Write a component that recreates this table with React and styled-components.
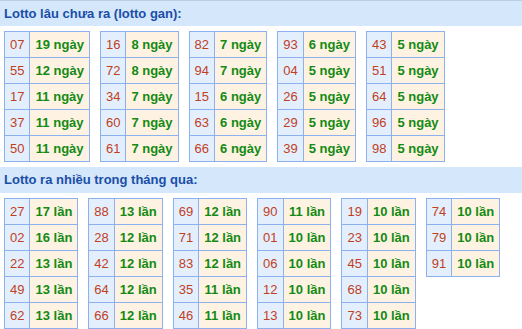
import React from "react"
import styled, { createGlobalStyle } from "styled-components"

const GlobalStyle = createGlobalStyle`
  body {
    margin: 0;
    background: #fff;
    font-family: "Liberation Sans", Arial, sans-serif;
  }
`

const gan = [
  [["07", 19], ["55", 12], ["17", 11], ["37", 11], ["50", 11]],
  [["16", 8], ["72", 8], ["34", 7], ["60", 7], ["61", 7]],
  [["82", 7], ["94", 7], ["15", 6], ["63", 6], ["66", 6]],
  [["93", 6], ["04", 5], ["26", 5], ["29", 5], ["39", 5]],
  [["43", 5], ["51", 5], ["64", 5], ["96", 5], ["98", 5]],
]

const nhieu = [
  [["27", 17], ["02", 16], ["22", 13], ["49", 13], ["62", 13]],
  [["88", 13], ["28", 12], ["42", 12], ["64", 12], ["66", 12]],
  [["69", 12], ["71", 12], ["83", 12], ["35", 11], ["46", 11]],
  [["90", 11], ["01", 10], ["06", 10], ["12", 10], ["13", 10]],
  [["19", 10], ["23", 10], ["45", 10], ["68", 10], ["73", 10]],
  [["74", 10], ["79", 10], ["91", 10]],
]

const Page = styled.div`
  width: 522px;
`

const Title = styled.div`
  height: 26px;
  line-height: 26px;
  padding-left: 4px;
  box-sizing: border-box;
  background: #d4e7fb;
  border-top: ${props => (props.$line ? "1px solid #b9cde3" : "none")};
  color: #1a4ea8;
  font-size: 13px;
  font-weight: bold;
`

const Tables = styled.div`
  display: flex;
  align-items: flex-start;
  gap: 10px;
  padding: 5px 4px 5px;
`

const Table = styled.table`
  border-collapse: collapse;
  font-size: 13px;
`

const Num = styled.td`
  height: 25px;
  padding: 0 5px;
  border: 1px solid #8db0ee;
  background: #e4effd;
  color: #c0401e;
  text-align: center;
`

const Count = styled.td`
  height: 25px;
  padding: 0 5px;
  border: 1px solid #8db0ee;
  background: #fef3e2;
  color: #138a13;
  font-weight: bold;
  text-align: center;
  white-space: nowrap;
`

function Block({ rows, unit }) {
  return (
    <Table>
      <tbody>
        {rows.map(([n, c]) => (
          <tr key={n}>
            <Num>{n}</Num>
            <Count>
              {c} {unit}
            </Count>
          </tr>
        ))}
      </tbody>
    </Table>
  )
}

export default function App() {
  return (
    <Page>
      <GlobalStyle />
      <Title $line>Lotto lâu chưa ra (lotto gan):</Title>
      <Tables>
        {gan.map((rows, i) => (
          <Block key={i} rows={rows} unit="ngày" />
        ))}
      </Tables>
      <Title>Lotto ra nhiều trong tháng qua:</Title>
      <Tables>
        {nhieu.map((rows, i) => (
          <Block key={i} rows={rows} unit="lần" />
        ))}
      </Tables>
    </Page>
  )
}
